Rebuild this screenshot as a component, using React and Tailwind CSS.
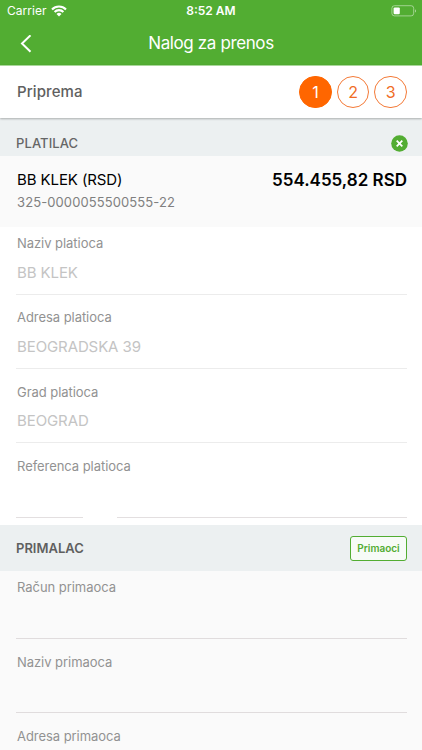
import React from 'react';

const STEPS = [1, 2, 3];
const ACTIVE_STEP = 1;

const PAYER_FIELDS = [
  { label: 'Naziv platioca', value: 'BB KLEK' },
  { label: 'Adresa platioca', value: 'BEOGRADSKA 39' },
  { label: 'Grad platioca', value: 'BEOGRAD' }
];

const RECIPIENT_FIELDS = [
  { label: 'Račun primaoca' },
  { label: 'Naziv primaoca' },
  { label: 'Adresa primaoca' }
];

function StatusBar() {
  return (
    <div className="grid h-[22px] grid-cols-3 items-center pl-[7px] pr-[5px] text-[12px] leading-none">
      <div className="flex items-center gap-[4px]">
        <span className="tracking-[0.05px]">Carrier</span>
        <svg width="16" height="12" viewBox="0 0 16 12" fill="none" stroke="white" strokeWidth="2.1">
          <path d="M1 4.4a9.9 9.9 0 0 1 14 0" />
          <path d="M3.6 7a6.2 6.2 0 0 1 8.8 0" />
          <path d="M8 11.6 5.5 9a3.5 3.5 0 0 1 5 0Z" fill="white" stroke="none" />
        </svg>
      </div>
      <span className="text-center font-semibold -ml-[2px]">8:52 AM</span>
      <svg className="justify-self-end" width="26" height="12" viewBox="0 0 26 12" fill="none">
        <rect x="0.9" y="0.7" width="21.8" height="10.2" rx="2.6" stroke="white" strokeOpacity="0.45" />
        <rect x="2.6" y="2.4" width="6.2" height="6.9" rx="1.2" fill="white" />
        <path d="M24 4.2c1.4.5 1.4 2.8 0 3.4Z" fill="white" fillOpacity="0.5" />
      </svg>
    </div>
  );
}

function NavBar() {
  return (
    <div className="grid h-[43px] grid-cols-[60px_1fr_60px] items-center">
      <svg className="ml-5" width="12" height="18" viewBox="0 0 12 18" fill="none" stroke="white" strokeWidth="2">
        <path d="M10.5 0.3 2 8.5l8.5 8.2" />
      </svg>
      <h1 className="text-center text-[17px] leading-none tracking-[-0.38px]">Nalog za prenos</h1>
    </div>
  );
}

function StepBar() {
  return (
    <div className="relative flex h-[53px] items-center justify-between border-t border-[#a9d79a] bg-white pl-[17px] pr-[15px] shadow-[0_1px_2px_rgba(0,0,0,0.28)]">
      <span className="text-[15px] font-medium tracking-[0.1px] text-[#606060]">Priprema</span>
      <div className="flex gap-[5px]">
        {STEPS.map((step) => (
          <span
            key={step}
            className={`flex size-[32.6px] items-center justify-center rounded-full border text-[16px] leading-none ${
              step === ACTIVE_STEP
                ? 'border-[#ff6600] bg-[#ff6600] text-white'
                : 'border-[#f47a37] text-[#f06c25]'
            }`}
          >
            {step}
          </span>
        ))}
      </div>
    </div>
  );
}

function Field({ label, value, children, dark }) {
  return (
    <div className="h-[74.4px] pl-4 pr-[15px] pt-[6px]">
      <div className="pl-[1px] text-[13px] leading-5 tracking-[-0.05px] text-[#929292]">{label}</div>
      {children || (
        <div className={`h-[41.7px] border-b pl-[1px] pt-[8.5px] text-[15px] leading-[22px] tracking-[-0.1px] text-[#c4c4c4] ${dark ? 'border-[#e0dcdd]' : 'border-[#ececec]'}`}>
          {value}
        </div>
      )}
    </div>
  );
}

export default function App() {
  return (
    <div className="h-[750px] w-full overflow-hidden bg-[#fafafa] font-['Inter',sans-serif]">
      <header className="bg-[#52ad32] text-white">
        <StatusBar />
        <NavBar />
      </header>
      <StepBar />

      <section className="bg-white">
        <div className="flex h-[38px] items-center justify-between bg-[#ecf0f1] pl-4 pr-[14px] pt-[12px]">
          <h2 className="text-[13px] font-medium leading-none tracking-[0.1px] text-[#666]">PLATILAC</h2>
          <svg width="17" height="17" viewBox="0 0 17 17">
            <circle cx="8.5" cy="8.5" r="8.3" fill="#52ad32" />
            <path d="m5.7 5.7 5.6 5.6m0-5.6-5.6 5.6" stroke="white" strokeWidth="1.8" />
          </svg>
        </div>
        <div className="h-[71px] bg-[#fafafa] pl-4 pr-[15px] pt-3">
          <div className="flex items-center justify-between pl-[1px] leading-6 text-black">
            <span className="text-[15px] tracking-[-0.1px]">BB KLEK (RSD)</span>
            <span className="text-[17px] font-semibold">554.455,82 RSD</span>
          </div>
          <div className="pl-[1px] text-[13px] leading-5 tracking-[0.1px] text-[#808080]">325-0000055500555-22</div>
        </div>
        {PAYER_FIELDS.map((field) => (
          <Field key={field.label} label={field.label} value={field.value} />
        ))}
        <Field label="Referenca platioca">
          <div className="flex h-[41.7px] gap-[34px]">
            <div className="w-[67px] border-b border-[#e3dfe0]" />
            <div className="flex-1 border-b border-[#e3dfe0]" />
          </div>
        </Field>
      </section>

      <section>
        <div className="flex h-[46.8px] items-center justify-between bg-[#ecf0f1] pl-4 pr-[15px] pt-[1px]">
          <h2 className="text-[13px] font-semibold leading-none text-[#5f5f5f]">PRIMALAC</h2>
          <button className="h-[25px] w-[57px] rounded-[3px] border border-[#52ad32] bg-[#f7fbf7] text-[10px] font-semibold leading-none text-[#52ad32]">
            Primaoci
          </button>
        </div>
        {RECIPIENT_FIELDS.map((field) => (
          <Field key={field.label} label={field.label} dark />
        ))}
      </section>
    </div>
  );
}
